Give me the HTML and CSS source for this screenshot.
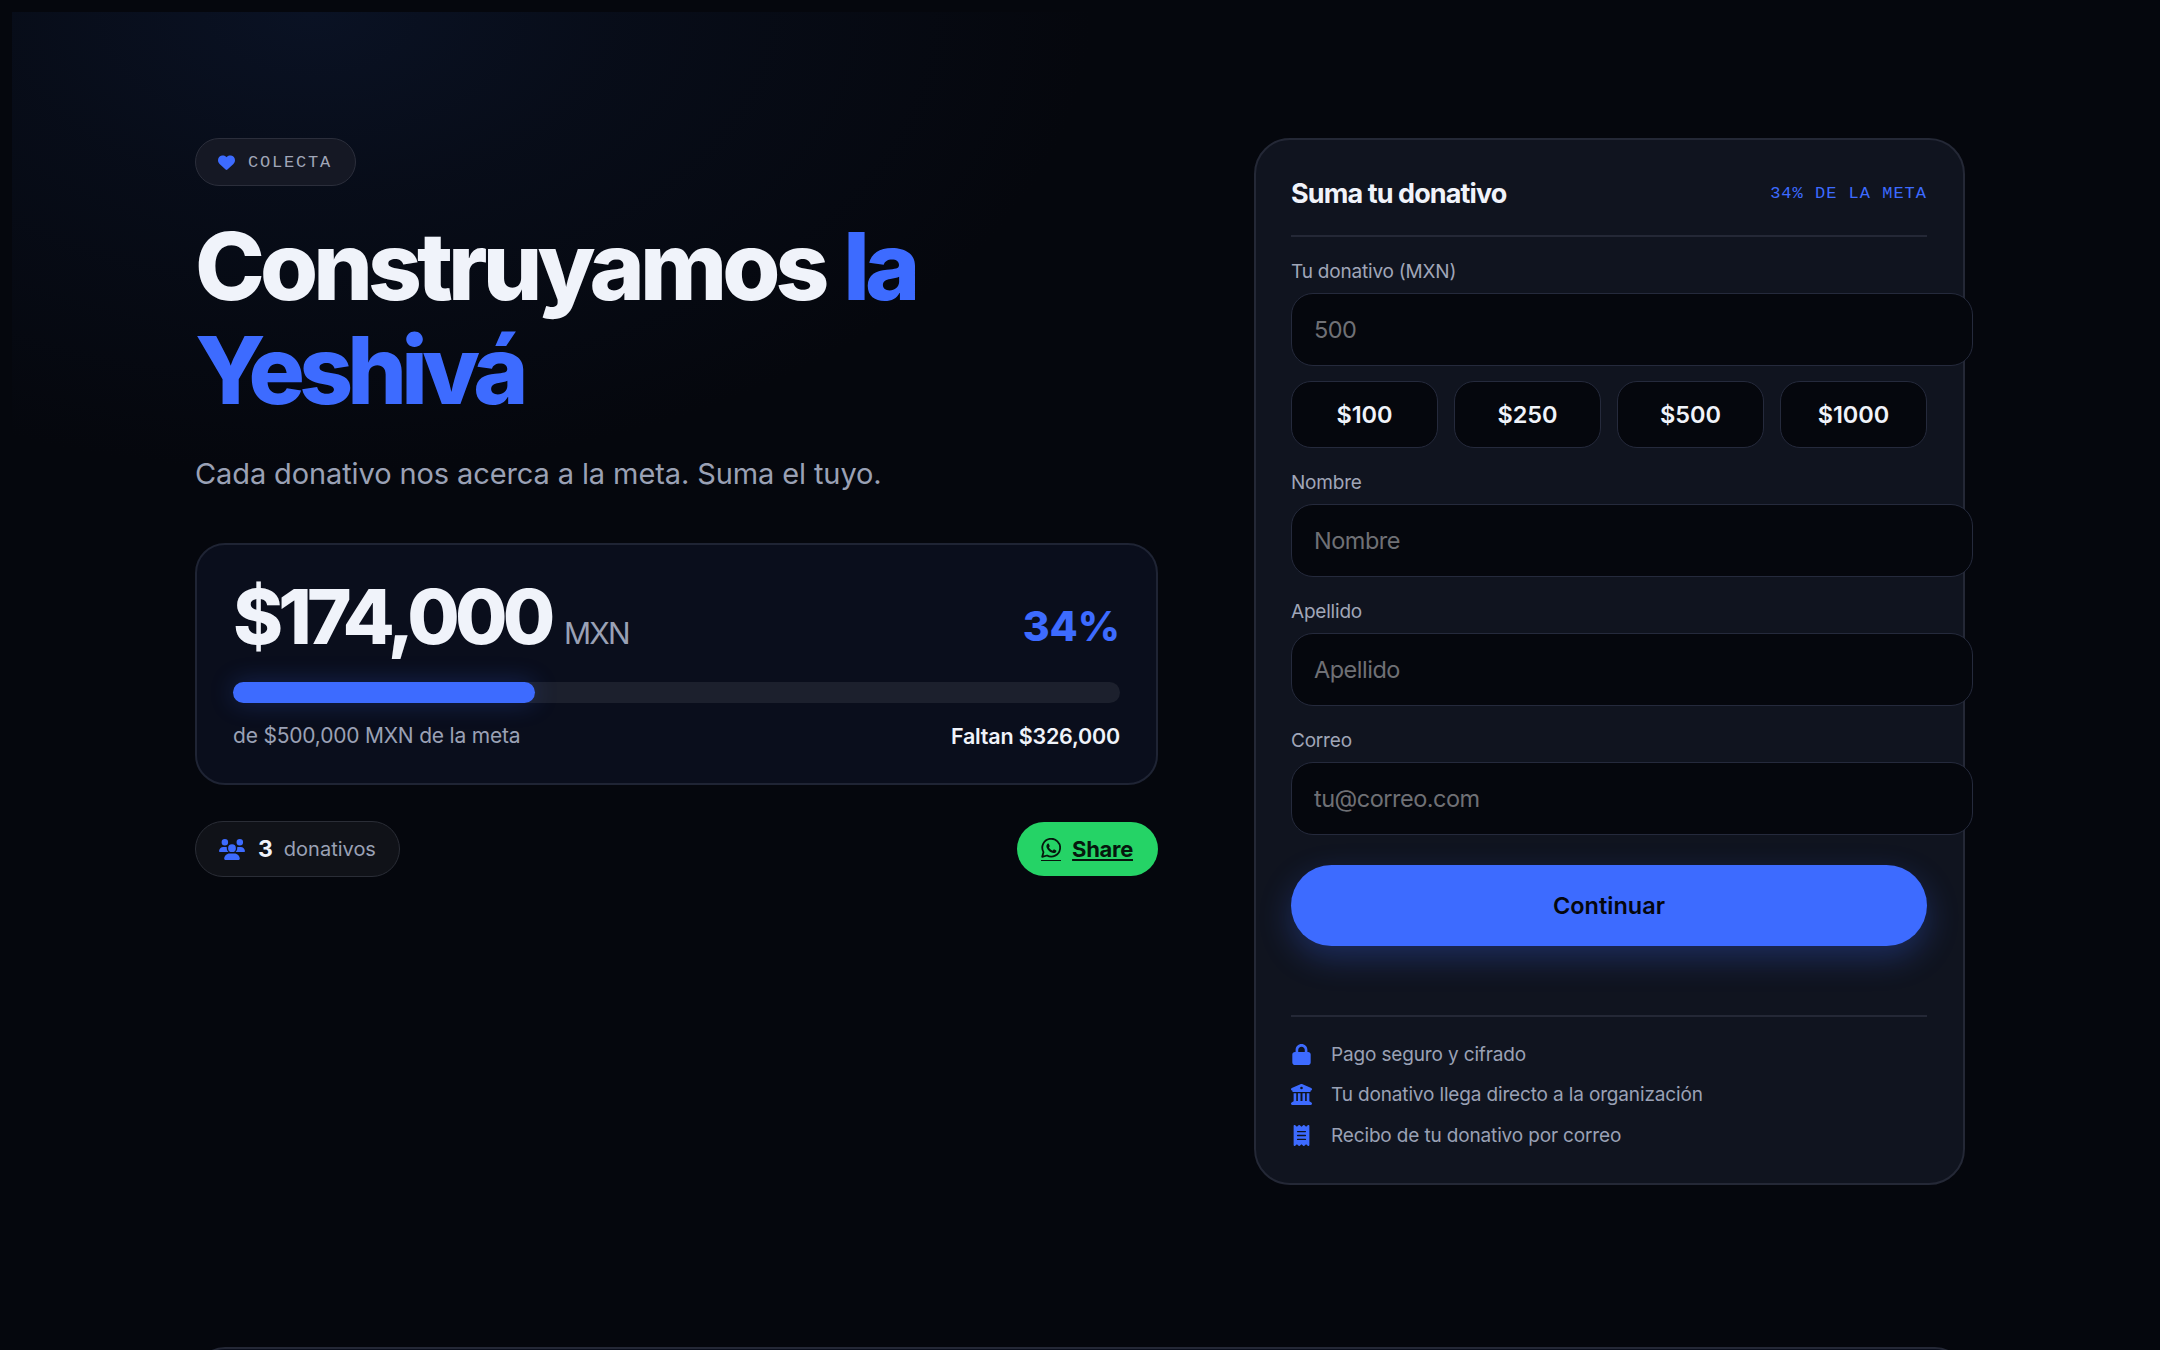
FILE: index.html
```html
<!DOCTYPE html>
<html lang="es">
<head>
    <meta charset="UTF-8">
    <meta name="viewport" content="width=device-width, initial-scale=1.0">
    <title>Construyamos la Yeshivá</title>
    <link rel="stylesheet" href="styles.css">
</head>
<body>
    <div class="glow"></div>
    <main class="page">
        <section class="hero">
            <div class="tag">
                <svg class="tag-icon" viewBox="0 0 512 512"><path d="M47.6 300.4L228.3 469.1c7.5 7 17.4 10.9 27.7 10.9s20.2-3.9 27.7-10.9L464.4 300.4c30.4-28.3 47.6-68 47.6-109.5v-5.8c0-69.9-50.5-129.5-119.4-141C347 36.5 300.6 51.4 268 84L256 96 244 84c-32.6-32.6-79-47.5-124.6-39.9C50.5 55.6 0 115.2 0 185.1v5.8c0 41.5 17.2 81.2 47.6 109.5z"/></svg>
                <span>COLECTA</span>
            </div>
            <h1>Construyamos <span class="accent">la</span><br><span class="accent yeshiva">Yeshivá</span></h1>
            <p class="lead">Cada donativo nos acerca a la meta. Suma el tuyo.</p>

            <div class="progress-card">
                <div class="amount-row">
                    <div class="amount"><strong>$174,000</strong> <span>MXN</span></div>
                    <div class="percent">34%</div>
                </div>
                <div class="bar"><div class="bar-fill" style="width: 34%"></div></div>
                <div class="goal-row">
                    <span>de $500,000 MXN de la meta</span>
                    <strong>Faltan $326,000</strong>
                </div>
            </div>

            <div class="meta-row">
                <div class="donors">
                    <svg class="donors-icon" viewBox="0 0 640 512"><path d="M144 0a80 80 0 1 1 0 160A80 80 0 1 1 144 0zM512 0a80 80 0 1 1 0 160A80 80 0 1 1 512 0zM0 298.7C0 239.8 47.8 192 106.7 192h42.7c15.9 0 31 3.5 44.6 9.7c-1.3 7.2-1.9 14.7-1.9 22.3c0 38.2 16.8 72.5 43.3 96H21.3C9.6 320 0 310.4 0 298.7zM405.3 320h-.7c26.6-23.5 43.3-57.8 43.3-96c0-7.6-.7-15-1.9-22.3c13.6-6.3 28.7-9.7 44.6-9.7h42.7C592.2 192 640 239.8 640 298.7c0 11.8-9.6 21.3-21.3 21.3H405.3zM224 224a96 96 0 1 1 192 0 96 96 0 1 1-192 0zM128 485.3C128 411.7 187.7 352 261.3 352H378.7C452.3 352 512 411.7 512 485.3c0 14.7-11.9 26.7-26.7 26.7H154.7c-14.7 0-26.7-11.9-26.7-26.7z"/></svg>
                    <strong>3</strong>
                    <span>donativos</span>
                </div>
                <a class="share" href="#">
                    <svg class="share-icon" viewBox="2 2 20 20"><path d="M3.200 20.800l1.300-4.700A8.900 8.900 0 1 1 8 19.500z" fill="none" stroke="currentColor" stroke-width="1.800" stroke-linejoin="round"/><path d="M9.300 7.600c-.3 0-.7.100-1 .5-.4.500-.9 1.200-.9 2.200 0 1.200.8 2.400 1 2.600.1.200 1.700 2.700 4.200 3.600 2 .8 2.500.6 2.900.6.500-.1 1.500-.7 1.700-1.300.2-.6.2-1.200.1-1.300l-2-1.100c-.2-.1-.4-.1-.6.1l-.8 1c-.1.200-.3.200-.5.100-1.500-.6-2.700-1.700-3.400-3-.1-.2 0-.4.1-.5l.5-.6c.2-.2.200-.4.100-.6l-.8-1.900c-.2-.4-.4-.5-.6-.5z"/></svg>
                    <span>Share</span>
                </a>
            </div>
        </section>

        <aside class="donate-card">
            <div class="donate-head">
                <h2>Suma tu donativo</h2>
                <span class="donate-status">34% DE LA META</span>
            </div>

            <label for="amount">Tu donativo (MXN)</label>
            <input type="text" id="amount" placeholder="500">

            <div class="chips">
                <button class="chip">$100</button>
                <button class="chip">$250</button>
                <button class="chip">$500</button>
                <button class="chip">$1000</button>
            </div>

            <label for="nombre">Nombre</label>
            <input type="text" id="nombre" placeholder="Nombre">

            <label for="apellido">Apellido</label>
            <input type="text" id="apellido" placeholder="Apellido">

            <label for="correo">Correo</label>
            <input type="text" id="correo" placeholder="tu@correo.com">

            <button class="submit">Continuar</button>

            <ul class="notes">
                <li>
                    <svg class="note-icon" viewBox="0 0 448 512"><path d="M144 144v48H304V144c0-44.200-35.800-80-80-80s-80 35.800-80 80zM80 192V144C80 64.500 144.500 0 224 0s144 64.500 144 144v48h16c35.300 0 64 28.700 64 64V448c0 35.300-28.700 64-64 64H64c-35.300 0-64-28.700-64-64V256c0-35.300 28.700-64 64-64H80z"/></svg>
                    <span>Pago seguro y cifrado</span>
                </li>
                <li>
                    <svg class="note-icon" viewBox="0 0 512 512"><path d="M243.400 2.600l-224 96c-14 6-21.800 21-18.700 35.800S16.800 160 32 160v8c0 13.300 10.700 24 24 24H456c13.300 0 24-10.700 24-24v-8c15.200 0 28.300-10.700 31.300-25.600s-4.800-29.900-18.700-35.800l-224-96c-8-3.400-17.200-3.400-25.200 0zM128 224H64V420.300c-.6 .3-1.200 .7-1.800 1.100l-48 32c-11.700 7.800-17 22.400-12.900 35.900S17.900 512 32 512H480c14.100 0 26.500-9.200 30.600-22.700s-1.100-28.100-12.900-35.900l-48-32c-.6-.4-1.200-.7-1.800-1.100V224H384V416H344V224H280V416H232V224H168V416H128V224zM256 64a32 32 0 1 1 0 64 32 32 0 1 1 0-64z"/></svg>
                    <span>Tu donativo llega directo a la organización</span>
                </li>
                <li>
                    <svg class="note-icon" viewBox="0 0 384 512"><path d="M14 2.200C22.500-1.700 32.500-.3 39.600 5.800L80 40.400 120.400 5.800c9-7.700 22.300-7.700 31.200 0L192 40.400 232.400 5.800c9-7.700 22.300-7.700 31.200 0L304 40.400 344.400 5.800c7.100-6.100 17.100-7.500 25.600-3.600s14 12.400 14 21.800V488c0 9.400-5.500 17.900-14 21.800s-18.500 2.500-25.600-3.600L304 471.600l-40.400 34.600c-9 7.700-22.300 7.700-31.200 0L192 471.600l-40.400 34.600c-9 7.700-22.300 7.700-31.200 0L80 471.600 39.600 506.200c-7.100 6.100-17.100 7.500-25.600 3.600S0 497.400 0 488V24C0 14.600 5.500 6.100 14 2.200zM96 144c-8.800 0-16 7.200-16 16s7.200 16 16 16H288c8.800 0 16-7.200 16-16s-7.200-16-16-16H96zM80 352c0 8.800 7.200 16 16 16H288c8.800 0 16-7.200 16-16s-7.200-16-16-16H96c-8.800 0-16 7.200-16 16zM96 240c-8.800 0-16 7.200-16 16s7.200 16 16 16H288c8.800 0 16-7.200 16-16s-7.200-16-16-16H96z"/></svg>
                    <span>Recibo de tu donativo por correo</span>
                </li>
            </ul>
        </aside>
    </main>
    <div class="next-section"></div>
</body>
</html>
```

FILE: styles.css
```css
* {
    box-sizing: border-box;
}
html, body {
    height: 1350px;
    overflow: hidden;
}
body {
    margin: 0;
    background-color: #05070d;
    color: #f0f3fa;
    font-family: Inter, "Liberation Sans", sans-serif;
}
.glow {
    position: absolute;
    top: 12px;
    left: 12px;
    width: 1300px;
    height: 700px;
    background: radial-gradient(ellipse 780px 460px at 300px 0, #0a1224 0%, rgba(10, 18, 36, 0.5) 40%, rgba(10, 18, 36, 0) 100%);
}
.page {
    position: relative;
    display: grid;
    grid-template-columns: 963px 711px;
    justify-content: space-between;
    align-items: start;
    width: 1770px;
    margin: 0 auto;
    padding-top: 138px;
}

/* left column */
.tag {
    display: inline-flex;
    align-items: center;
    gap: 13px;
    height: 48px;
    padding: 0 23px 0 22px;
    background: #151824;
    border: 1px solid #2b2e3b;
    border-radius: 24px;
    color: #a0a6b8;
    font-family: "Liberation Mono", monospace;
    font-size: 17px;
    letter-spacing: 1.800px;
}
.tag-icon {
    width: 17px;
    height: 17px;
    fill: #3d6bff;
}
h1 {
    margin: 28px 0 0;
    color: #f0f3fa;
    font-size: 94px;
    font-weight: 800;
    line-height: 104px;
    letter-spacing: -4.900px;
    word-spacing: 3px;
}
.accent {
    color: #3d6bff;
}
.yeshiva {
    letter-spacing: -5.700px;
}
.lead {
    margin: 32px 0 0;
    color: #9aa1b5;
    font-size: 29px;
    line-height: 40px;
    letter-spacing: -0.110px;
}
.progress-card {
    margin-top: 49px;
    padding: 31px 36px 0;
    height: 242px;
    background: #0a0e1c;
    border: 2px solid #1f2434;
    border-radius: 30px;
}
.amount-row {
    display: flex;
    justify-content: space-between;
    align-items: flex-end;
    height: 80px;
}
.amount strong {
    font-size: 76px;
    font-weight: 800;
    line-height: 80px;
    letter-spacing: -4.800px;
}
.amount span {
    margin-left: 9px;
    color: #9aa1b5;
    font-size: 30px;
    letter-spacing: -1.800px;
}
.percent {
    color: #3d6bff;
    font-size: 41px;
    font-weight: 800;
    line-height: 60px;
}
.bar {
    margin-top: 26px;
    height: 21px;
    background: #1c202d;
    border-radius: 11px;
}
.bar-fill {
    height: 100%;
    background: #3d6bff;
    border-radius: 11px;
    box-shadow: 0 0 24px rgba(61, 107, 255, 0.25);
}
.goal-row {
    display: flex;
    justify-content: space-between;
    margin-top: 19px;
    color: #9aa1b5;
    font-size: 21px;
    line-height: 28px;
    letter-spacing: -0.200px;
}
.goal-row strong {
    color: #f0f3fa;
    font-size: 21.500px;
    font-weight: 600;
}
.meta-row {
    display: flex;
    justify-content: space-between;
    align-items: center;
    margin-top: 36px;
}
.donors {
    display: flex;
    align-items: center;
    height: 56px;
    padding: 0 23px;
    background: #101218;
    border: 1px solid #2a2d36;
    border-radius: 28px;
    color: #9aa1b5;
    font-size: 20px;
}
.donors-icon {
    width: 26px;
    height: 21px;
    fill: #3d6bff;
}
.donors strong {
    margin: 0 11px 0 13px;
    color: #f0f3fa;
    font-size: 23px;
    font-weight: 700;
}
.share {
    display: flex;
    align-items: center;
    gap: 11px;
    height: 54px;
    padding: 0 25px 0 24px;
    background: #25d366;
    border-radius: 27px;
    color: #06170d;
    font-size: 22px;
    font-weight: 700;
    letter-spacing: -0.300px;
}
.share-icon {
    width: 20px;
    height: 23px;
    padding-bottom: 2px;
    border-bottom: 1.500px solid currentColor;
    fill: currentColor;
}

/* right column */
.donate-card {
    height: 1047px;
    padding: 35px 36px 0 35px;
    background: #10141f;
    border: 2px solid #242836;
    border-radius: 36px;
}
.donate-head {
    display: flex;
    justify-content: space-between;
    align-items: center;
    box-sizing: content-box;
    height: 36px;
    padding-bottom: 24px;
    border-bottom: 2px solid #242836;
}
h2 {
    margin: 0;
    font-size: 27px;
    font-weight: 700;
    letter-spacing: -0.900px;
}
.donate-status {
    color: #3d6bff;
    font-family: "Liberation Mono", monospace;
    font-size: 17px;
    letter-spacing: 1px;
}
label {
    display: block;
    margin: 22px 0 8px;
    color: #a0a6b8;
    font-size: 19px;
    line-height: 26px;
    letter-spacing: -0.200px;
}
label:first-of-type {
    margin-top: 22px;
}
input {
    display: block;
    box-sizing: content-box;
    width: 100%;
    height: 71px;
    padding: 0 22px;
    background: #05070d;
    border: 1px solid #252a3c;
    border-radius: 22px;
    color: #f0f3fa;
    font-family: inherit;
    font-size: 23.500px;
    letter-spacing: -0.500px;
}
input::placeholder {
    color: #6f7075;
}
.chips {
    display: grid;
    grid-template-columns: repeat(4, 1fr);
    gap: 16px;
    margin-top: 15px;
}
.chip {
    height: 67px;
    background: #05070d;
    border: 1px solid #252a3c;
    border-radius: 20px;
    color: #f0f3fa;
    font-family: inherit;
    font-size: 23.500px;
    font-weight: 600;
}
.submit {
    display: block;
    width: 100%;
    height: 81px;
    margin-top: 30px;
    background: #3d6bff;
    border: none;
    border-radius: 41px;
    box-shadow: 0 12px 32px rgba(61, 107, 255, 0.28);
    color: #05070d;
    font-family: inherit;
    font-size: 23.500px;
    font-weight: 600;
}
.notes {
    margin: 69px 0 0;
    padding: 17px 0 0;
    list-style: none;
    border-top: 2px solid #242836;
    color: #9aa1b5;
    font-size: 19px;
    letter-spacing: -0.150px;
}
.notes li {
    display: flex;
    align-items: center;
    gap: 19px;
    height: 40.500px;
}
.note-icon {
    flex: none;
    width: 21px;
    height: 21px;
    fill: #3d6bff;
}
.next-section {
    position: relative;
    width: 1770px;
    height: 120px;
    margin: 162px auto 0;
    background: #0a0e1c;
    border: 2px solid #242836;
    border-radius: 30px;
}
```
